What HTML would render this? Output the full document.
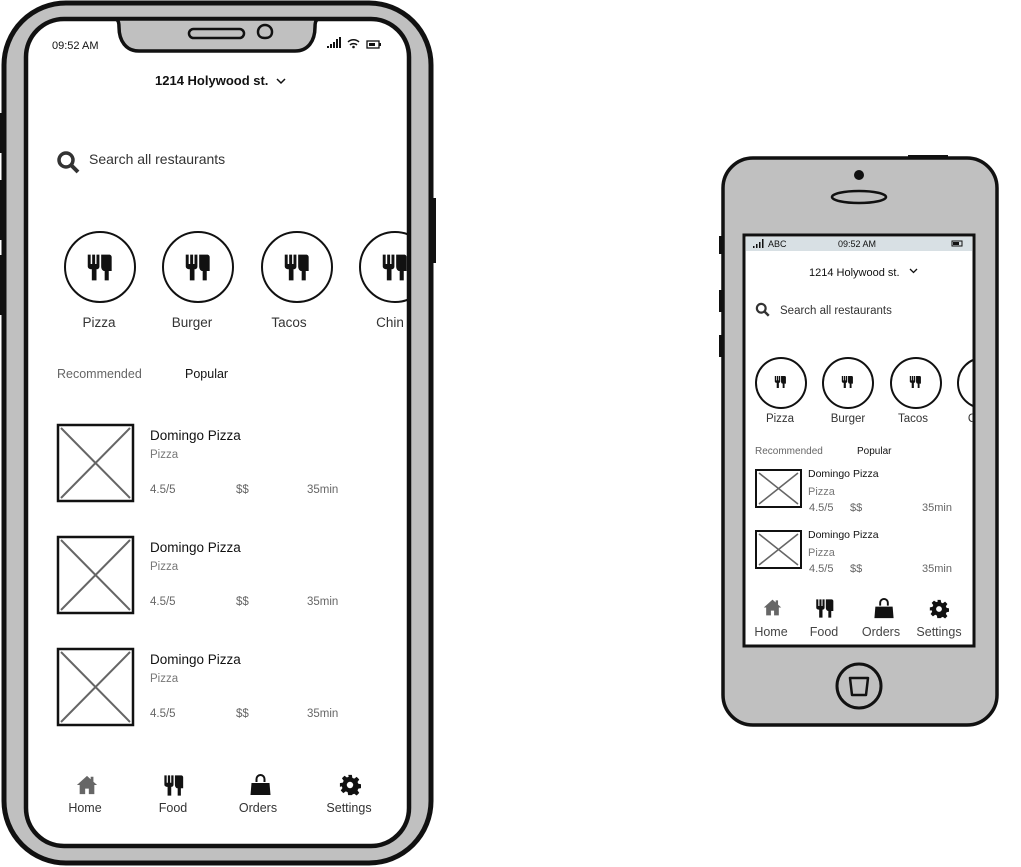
<!DOCTYPE html>
<html><head><meta charset="utf-8"><style>
html,body{margin:0;padding:0;background:#fff;width:1021px;height:867px;overflow:hidden}
svg{display:block}
text{font-family:"Liberation Sans",sans-serif}
</style></head><body>
<svg width="1021" height="867" viewBox="0 0 1021 867" xmlns="http://www.w3.org/2000/svg">
<defs>
<symbol id="fk" viewBox="0 0 24 24">
<path d="M1.5 1h2.5v8h1.3V1h2.5v8H9V1h2.5v10c0 1.5-1 2.5-2.5 2.5V23H5V13.5C3 13.5 1.5 12.5 1.5 11z" fill="#111"/>
<path d="M13 1h7c1 0 2 1 2 2v12h-2.5v8h-3.5v-8c-2 0-3-2-3-4z" fill="#111"/>
</symbol>
<symbol id="home" viewBox="0 0 24 24"><path d="M12 2L1 12h3v10h6v-6h4v6h6V12h3l-4-3.6V3h-3v2.7z" fill="#666"/></symbol>
<symbol id="bag" viewBox="0 0 24 24"><path d="M8 9V6a4 4 0 0 1 8 0v3" stroke="#111" stroke-width="2" fill="none"/><path d="M3 10h18l1 12H2z" fill="#111"/></symbol>
<symbol id="gear" viewBox="0 0 24 24"><path d="M10 1h4l.6 3.2 2 .9 2.7-1.9 2.8 2.8-1.9 2.7.9 2 3.2.6v4l-3.2.6-.9 2 1.9 2.7-2.8 2.8-2.7-1.9-2 .9L14 23h-4l-.6-3.2-2-.9-2.7 1.9-2.8-2.8 1.9-2.7-.9-2L1 14v-4l3.2-.6.9-2-1.9-2.7 2.8-2.8 2.7 1.9 2-.9z" fill="#111"/><circle cx="12" cy="12" r="3.5" fill="#fff"/></symbol>
<symbol id="srch" viewBox="0 0 24 24"><circle cx="10" cy="10" r="7" stroke="#333" stroke-width="3.5" fill="none"/><path d="M15 15l7 7" stroke="#333" stroke-width="4"/></symbol>
<clipPath id="bigclip"><rect x="27" y="20" width="381" height="826"/></clipPath>
<clipPath id="smclip"><rect x="745" y="236" width="228" height="410"/></clipPath>
</defs>

<!-- BIG PHONE -->
<rect x="0" y="113" width="6" height="40" fill="#111"/>
<rect x="0" y="180" width="6" height="60" fill="#111"/>
<rect x="0" y="255" width="6" height="60" fill="#111"/>
<rect x="430" y="198" width="6" height="65" fill="#111"/>
<rect x="4" y="3" width="427" height="860" rx="62" fill="#c0c0c0" stroke="#111" stroke-width="5"/>
<rect x="26" y="19" width="383" height="827" rx="38" fill="#fff" stroke="#111" stroke-width="4.5"/>
<path d="M110 19h5c3 0 4 3 4 8 0 14 7 24 20 24h156c13 0 20-10 20-24 0-5 1-8 4-8h5z" fill="#c0c0c0" stroke="#111" stroke-width="3.5"/>
<rect x="189" y="29" width="55" height="9" rx="4.5" fill="none" stroke="#111" stroke-width="2.5"/>
<path d="M265 25c4 0 7 3 7 7s-3 6-7 6-7-2-7-6 3-7 7-7z" fill="none" stroke="#111" stroke-width="2.5"/>
<text x="52" y="49" font-size="11" fill="#111">09:52 AM</text>
<g fill="#111"><rect x="327" y="46" width="2" height="2"/><rect x="330" y="44" width="2" height="4"/><rect x="333" y="42" width="2" height="6"/><rect x="336" y="39" width="2" height="9"/><rect x="339" y="37" width="2" height="11"/></g>
<path d="M348 42a8 8 0 0 1 11 0M350 45a5 5 0 0 1 7 0" stroke="#111" stroke-width="1.5" fill="none"/><circle cx="353.5" cy="47" r="1.3" fill="#111"/>
<rect x="367" y="41" width="12" height="7" fill="none" stroke="#111" stroke-width="1.3"/><rect x="369" y="43" width="6" height="3" fill="#111"/><rect x="379" y="43" width="2" height="3" fill="#111"/>

<g clip-path="url(#bigclip)">
<text x="155" y="85" font-size="13" font-weight="bold" fill="#111">1214 Holywood st.</text>
<path d="M277 79l4 4 4-4" stroke="#111" stroke-width="1.5" fill="none"/>
<use href="#srch" x="56" y="150" width="24" height="24"/>
<text x="89" y="164" font-size="14" fill="#333">Search all restaurants</text>
<g stroke="#111" stroke-width="2" fill="none">
<circle cx="100" cy="267" r="35"/><circle cx="198" cy="267" r="35"/><circle cx="297" cy="267" r="35"/><circle cx="395" cy="267" r="35"/>
</g>
<use href="#fk" x="86" y="252" width="28" height="31"/>
<use href="#fk" x="184" y="252" width="28" height="31"/>
<use href="#fk" x="283" y="252" width="28" height="31"/>
<use href="#fk" x="381" y="252" width="28" height="31"/>
<g font-size="13.5" fill="#333" text-anchor="middle">
<text x="99" y="327">Pizza</text><text x="192" y="327">Burger</text><text x="289" y="327">Tacos</text><text x="390" y="327">Chin</text>
</g>
</g>
<text x="57" y="378" font-size="12.5" fill="#666">Recommended</text>
<text x="185" y="378" font-size="12.5" fill="#111">Popular</text>

<g id="item">
<rect x="58" y="425" width="75" height="76" fill="#fff" stroke="#111" stroke-width="2.5"/>
<path d="M61 428l69 70M130 428l-69 70" stroke="#666" stroke-width="2"/>
<text x="150" y="440" font-size="13.5" fill="#111">Domingo Pizza</text>
<text x="150" y="458" font-size="11.5" fill="#777">Pizza</text>
<text x="150" y="493" font-size="11.5" fill="#666">4.5/5</text>
<text x="236" y="493" font-size="11.5" fill="#666">$$</text>
<text x="307" y="493" font-size="11.5" fill="#666">35min</text>
</g>
<use href="#item" y="112"/>
<use href="#item" y="224"/>

<use href="#home" x="76" y="774" width="22" height="22"/>
<use href="#fk" x="163" y="773" width="22" height="25"/>
<use href="#bag" x="248" y="773" width="25" height="24"/>
<use href="#gear" x="339" y="774" width="22" height="22"/>
<g font-size="12.5" fill="#333" text-anchor="middle">
<text x="85" y="812">Home</text><text x="173" y="812">Food</text><text x="258" y="812">Orders</text><text x="349" y="812">Settings</text>
</g>

<!-- SMALL PHONE -->
<rect x="719" y="236" width="5" height="18" fill="#111"/>
<rect x="719" y="290" width="5" height="22" fill="#111"/>
<rect x="719" y="335" width="5" height="22" fill="#111"/>
<rect x="908" y="155" width="40" height="5" fill="#111"/>
<rect x="723" y="158" width="274" height="567" rx="30" fill="#c0c0c0" stroke="#111" stroke-width="3.5"/>
<rect x="744" y="235" width="230" height="411" fill="#fff" stroke="#111" stroke-width="3"/>
<rect x="746" y="237" width="226" height="14" fill="#d8e0e4"/>
<circle cx="859" cy="175" r="5" fill="#111"/>
<ellipse cx="859" cy="197" rx="27" ry="6" fill="none" stroke="#111" stroke-width="2.5"/>
<circle cx="859" cy="686" r="22" fill="none" stroke="#111" stroke-width="3"/>
<path d="M850 678h18l-2 17h-14z" fill="none" stroke="#111" stroke-width="2.5" stroke-linejoin="round"/>
<g fill="#111"><rect x="753" y="246" width="1.5" height="2"/><rect x="756" y="244" width="1.5" height="4"/><rect x="759" y="242" width="1.5" height="6"/><rect x="762" y="239" width="1.5" height="9"/></g>
<text x="768" y="247" font-size="9" fill="#111">ABC</text>
<text x="838" y="247" font-size="9" fill="#111">09:52 AM</text>
<rect x="952" y="241" width="10" height="5" fill="none" stroke="#111" stroke-width="1"/><rect x="953" y="242" width="6" height="3" fill="#111"/>
<g clip-path="url(#smclip)">
<text x="809" y="276" font-size="11" fill="#111">1214 Holywood st.</text>
<path d="M910 269l3.5 3.5 3.5-3.5" stroke="#111" stroke-width="1.3" fill="none"/>
<use href="#srch" x="755" y="302" width="15" height="15"/>
<text x="780" y="314" font-size="11.5" fill="#333">Search all restaurants</text>
<g stroke="#111" stroke-width="2" fill="none">
<circle cx="781" cy="383" r="25"/><circle cx="848" cy="383" r="25"/><circle cx="916" cy="383" r="25"/><circle cx="983" cy="383" r="25"/>
</g>
<use href="#fk" x="774" y="374" width="13" height="16"/>
<use href="#fk" x="841" y="374" width="13" height="16"/>
<use href="#fk" x="909" y="374" width="13" height="16"/>
<g font-size="11.5" fill="#333" text-anchor="middle">
<text x="780" y="422">Pizza</text><text x="848" y="422">Burger</text><text x="913" y="422">Tacos</text><text x="972" y="422">C</text>
</g>
</g>
<text x="755" y="454" font-size="10" fill="#666">Recommended</text>
<text x="857" y="454" font-size="10" fill="#111">Popular</text>
<g id="sitem">
<rect x="756" y="470" width="45" height="37" fill="#fff" stroke="#111" stroke-width="2"/>
<path d="M759 473l39 31M798 473l-39 31" stroke="#666" stroke-width="1.6"/>
<text x="808" y="477" font-size="10.5" fill="#111">Domingo Pizza</text>
<text x="808" y="495" font-size="11" fill="#777">Pizza</text>
<text x="809" y="511" font-size="11" fill="#666">4.5/5</text>
<text x="850" y="511" font-size="11" fill="#666">$$</text>
<text x="922" y="511" font-size="11" fill="#666">35min</text>
</g>
<use href="#sitem" y="61"/>
<use href="#home" x="763" y="598" width="19" height="19"/>
<use href="#fk" x="815" y="597" width="20" height="23"/>
<use href="#bag" x="872" y="597" width="24" height="23"/>
<use href="#gear" x="929" y="599" width="20" height="20"/>
<g font-size="12.5" fill="#444" text-anchor="middle">
<text x="771" y="636">Home</text><text x="824" y="636">Food</text><text x="881" y="636">Orders</text><text x="939" y="636">Settings</text>
</g>
</svg>
</body></html>
